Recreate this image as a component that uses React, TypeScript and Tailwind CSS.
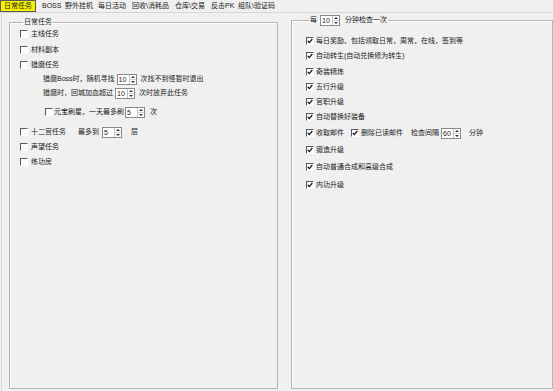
import React from 'react'

const tabs = [
  { label: '日常任务', w: 'w-[42px]', active: true },
  { label: 'BOSS', w: 'w-[23px]' },
  { label: '野外挂机', w: 'w-[33px]' },
  { label: '每日活动', w: 'w-[34px]' },
  { label: '回收\\消耗品', w: 'w-[43px]' },
  { label: '仓库\\交易', w: 'w-[36px]' },
  { label: '反击PK', w: 'w-[27px]' },
  { label: '组队\\验证码', w: 'w-[60px]' },
]

function Box({ checked }: { checked?: boolean }) {
  return (
    <span className="w-[8px] h-[8px] shrink-0 bg-[#fbfbfb] border border-t-[#5a5a5a] border-l-[#5a5a5a] border-b-white border-r-white">
      {checked && (
        <svg viewBox="0 0 6 6" className="block w-[6px] h-[6px]">
          <path d="M0.8 2.8 L2.3 4.6 L5.3 1" fill="none" stroke="#111" strokeWidth="1.2" />
        </svg>
      )}
    </span>
  )
}

function Spin({ v }: { v: string }) {
  return (
    <span className="flex h-[11px] w-[20px] shrink-0 bg-white border border-[#8a8a8a]">
      <span className="flex-1 pl-[1px] leading-[9px] text-[7px]">{v}</span>
      <span className="flex flex-col w-[7px] border-l border-[#c4c4c4]">
        <span className="flex-1 flex items-center justify-center border-b border-[#d0d0d0]">
          <svg viewBox="0 0 4 2" className="w-[4px] h-[2px]">
            <path d="M0 2 L2 0 L4 2 Z" fill="#333" />
          </svg>
        </span>
        <span className="flex-1 flex items-center justify-center">
          <svg viewBox="0 0 4 2" className="w-[4px] h-[2px]">
            <path d="M0 0 L2 2 L4 0 Z" fill="#333" />
          </svg>
        </span>
      </span>
    </span>
  )
}

function Check({ label, checked, className = '' }: { label: string; checked?: boolean; className?: string }) {
  return (
    <div className={`flex items-center h-[12px] ${className}`}>
      <Box checked={checked} />
      <span className={checked ? 'ml-[2px]' : 'ml-[3px]'}>{label}</span>
    </div>
  )
}

export default function App() {
  return (
    <div className="w-[553px] h-[391px] bg-[#f0f0f0] flex flex-col overflow-hidden text-[7px] leading-[10px] text-[#1a1a1a] font-['Liberation_Sans','Noto_Sans_CJK_SC',sans-serif]">
      <div className="h-[12px] flex items-center shrink-0">
        {tabs.map((t) => (
          <div key={t.label} className={`${t.w} shrink-0 flex`}>
            {t.active ? (
              <span className="h-[12px] px-[3px] bg-[#f4f200] border border-[#5a5a5a] leading-[10px]">{t.label}</span>
            ) : (
              <span className="leading-[10px]">{t.label}</span>
            )}
          </div>
        ))}
      </div>

      <div className="flex-1 ml-[1px] border-t border-l border-[#d6d6d6] pl-[7px] pb-[2px] flex gap-[13px]">
        <fieldset className="mt-[4px] w-[269px] shrink-0 border border-[#b4b4b4] shadow-[inset_1px_1px_0_#ffffff] pl-[10px] pt-[1px]">
          <legend className="ml-[3px] px-[1px] leading-[10px]">日常任务</legend>
          <Check label="主线任务" />
          <Check label="材料副本" className="mt-[4px]" />
          <Check label="猎魔任务" className="mt-[3px]" />
          <div className="flex items-center h-[12px] mt-[2px] pl-[23px]">
            <span>猎魔Boss时，随机寻找</span>
            <span className="ml-[2px]"><Spin v="10" /></span>
            <span className="ml-[4px]">次找不到怪暂时退出</span>
          </div>
          <div className="flex items-center h-[12px] mt-[2px] pl-[23px]">
            <span>猎魔时，回城加血超过</span>
            <span className="ml-[2px]"><Spin v="10" /></span>
            <span className="ml-[4px]">次时放弃此任务</span>
          </div>
          <div className="flex items-center h-[12px] mt-[7px] pl-[25px]">
            <Box />
            <span className="ml-[1px]">元宝刷星，一天最多刷</span>
            <span className="ml-[1px]"><Spin v="5" /></span>
            <span className="ml-[5px]">次</span>
          </div>
          <div className="flex items-center h-[12px] mt-[8px]">
            <Box />
            <span className="ml-[3px] w-[47px]">十二宫任务</span>
            <span>最多到</span>
            <span className="ml-[3px]"><Spin v="5" /></span>
            <span className="ml-[9px]">层</span>
          </div>
          <Check label="声望任务" className="mt-[3px]" />
          <Check label="练功房" className="mt-[3px]" />
        </fieldset>

        <fieldset className="mt-[1px] w-[262px] shrink-0 border border-[#b4b4b4] shadow-[inset_1px_1px_0_#ffffff] pl-[14px] pt-[9px]">
          <legend className="ml-[3px] px-[1px] h-[12px] flex items-center">
            <span>每</span>
            <span className="ml-[3px]"><Spin v="10" /></span>
            <span className="ml-[5px]">分钟检查一次</span>
          </legend>
          <Check checked label="每日奖励、包括领取日常，周常，在线，签到等" />
          <Check checked label="自动转生(自动兑换修为转生)" className="mt-[3px]" />
          <Check checked label="奇装精炼" className="mt-[4px]" />
          <Check checked label="五行升级" className="mt-[3px]" />
          <Check checked label="官职升级" className="mt-[3px]" />
          <Check checked label="自动替换好装备" className="mt-[3px]" />
          <div className="flex items-center h-[12px] mt-[4px]">
            <Box checked />
            <span className="ml-[2px] w-[35px]">收取邮件</span>
            <Box checked />
            <span className="ml-[2px] w-[50px]">删除已读邮件</span>
            <span>检查间隔</span>
            <span className="ml-[2px]"><Spin v="60" /></span>
            <span className="ml-[8px]">分钟</span>
          </div>
          <Check checked label="锻造升级" className="mt-[5px]" />
          <Check checked label="自动普通合成和高级合成" className="mt-[5px]" />
          <Check checked label="内功升级" className="mt-[6px]" />
        </fieldset>
      </div>
    </div>
  )
}
